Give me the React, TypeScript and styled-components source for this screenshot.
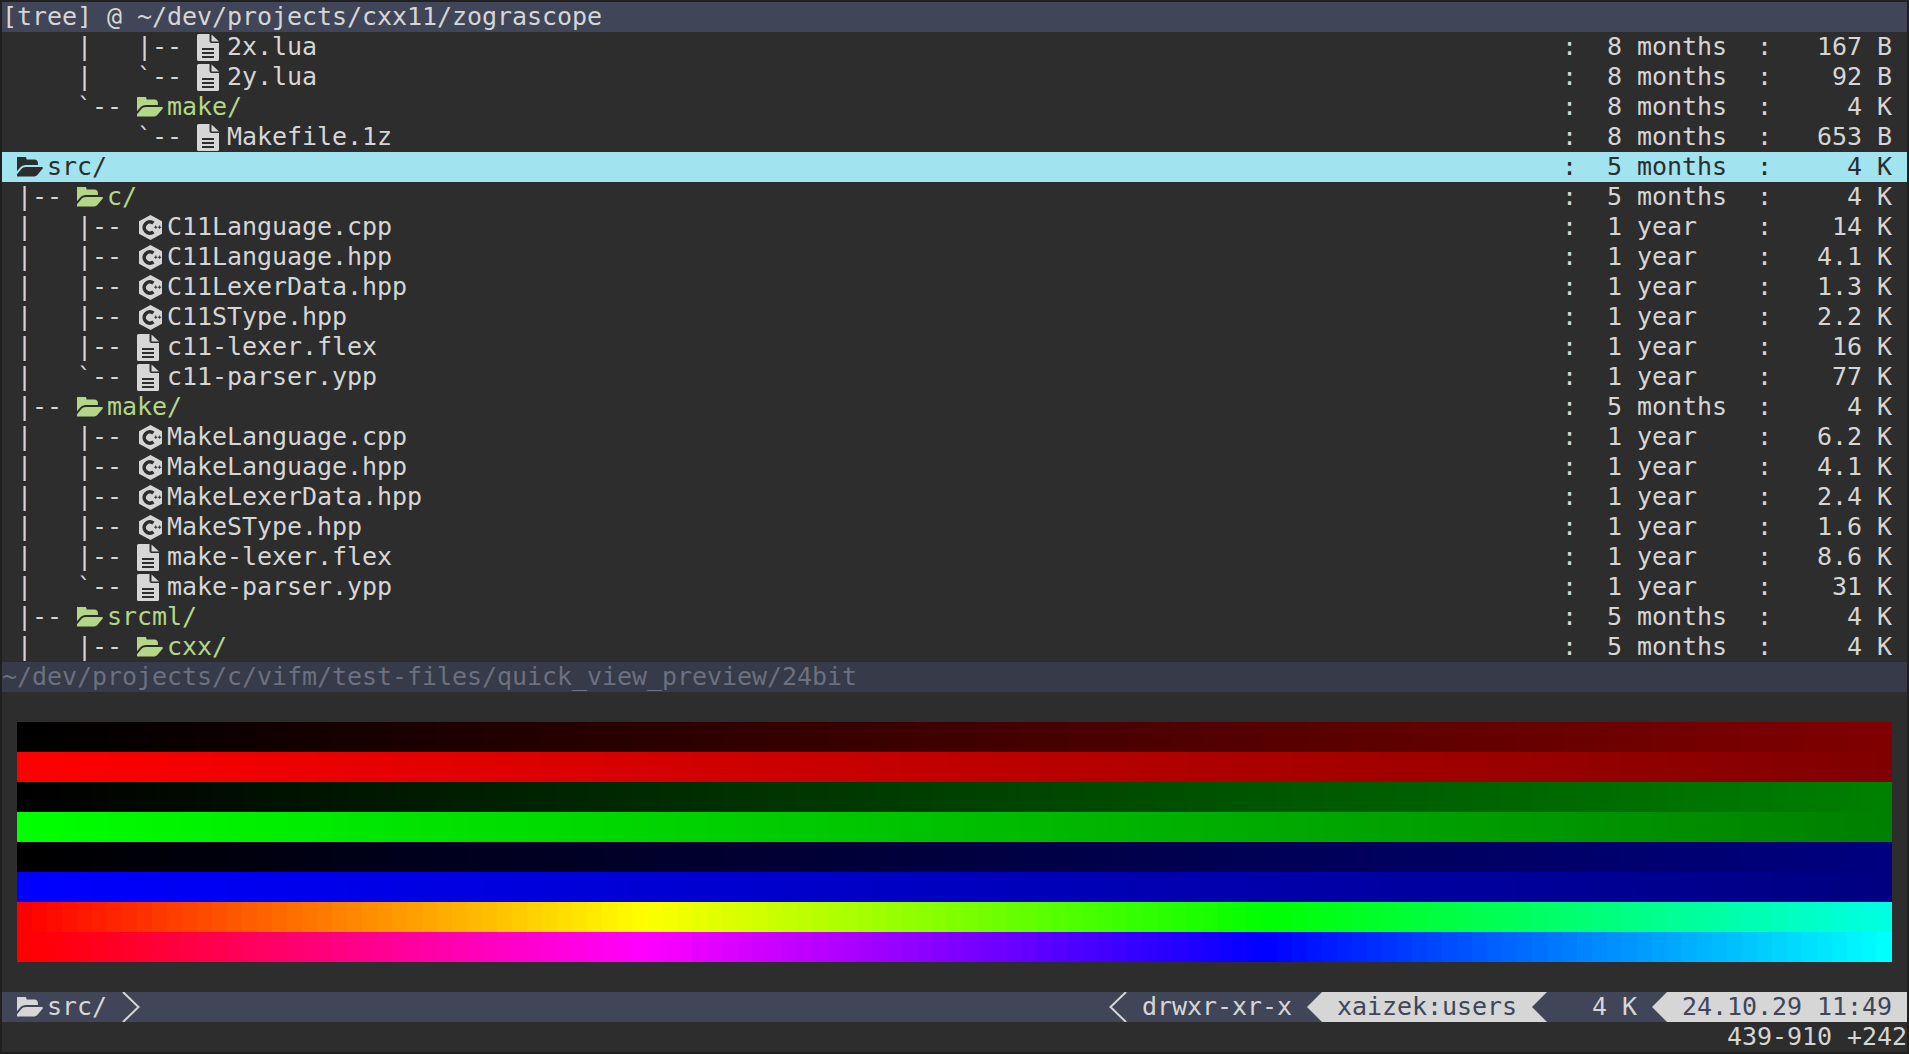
import React from "react";
import styled, { createGlobalStyle } from "styled-components";

const CELL = 15;

const Global = createGlobalStyle`
  html, body { margin: 0; padding: 0; background: #202020; overflow: hidden; }
  #root { width: 1909px; height: 1054px; }
`;

const Screen = styled.div`
  box-sizing: border-box;
  width: 1909px;
  height: 1054px;
  padding: 2px;
  background: #202020;
`;

const Terminal = styled.div`
  display: flex;
  flex-direction: column;
  width: 1905px;
  height: 1050px;
  background: #2d2d2d;
  color: #d6d6d6;
  font-family: "DejaVu Sans Mono", monospace;
  font-size: 25px;
  line-height: 30px;
  letter-spacing: -0.05px;
  white-space: pre;
  overflow: hidden;
`;

const TitleBar = styled.div`
  height: 30px;
  background: #404557;
  flex: none;
`;

const FileList = styled.div`
  display: flex;
  flex-direction: column;
  flex: none;
`;

const Row = styled.div<{ $active?: boolean }>`
  display: grid;
  grid-template-columns: 1545px 45px 150px 15px 120px;
  height: 30px;
  padding: 0 15px;
  background: ${(p) => (p.$active ? "#a1e3ef" : "transparent")};
  color: ${(p) => (p.$active ? "#2d2d2d" : "#d6d6d6")};
`;

const NameCell = styled.div`
  display: flex;
  align-items: center;
  height: 30px;
`;

const Name = styled.span<{ $dir?: boolean; $active?: boolean }>`
  color: ${(p) => (p.$active ? "#2d2d2d" : p.$dir ? "#b4d787" : "inherit")};
`;

const IconSlot = styled.span`
  display: flex;
  align-items: center;
  width: 30px;
  height: 30px;
  flex: none;
`;

const Size = styled.div`
  text-align: right;
`;

const PathBar = styled.div`
  height: 30px;
  flex: none;
  background: #363a49;
  color: #6c7080;
`;

const Preview = styled.div`
  display: flex;
  flex-direction: column;
  height: 240px;
  padding: 30px 15px;
  flex: none;
`;

const Band = styled.div`
  height: 30px;
  flex: none;
`;

const StatusBar = styled.div`
  display: flex;
  height: 30px;
  flex: none;
  background: #404557;
  color: #d6d6d6;
`;

const StatusLeft = styled.div`
  display: flex;
  align-items: center;
  padding-left: 15px;
`;

const ThinGlyph = styled.svg`
  display: block;
  width: 18px;
  height: 30px;
  flex: none;
`;

const CurrentName = styled.span`
  width: 75px;
`;

const StatusRight = styled.div`
  display: flex;
  margin-left: auto;
`;

const Perms = styled.span`
  width: 165px;
  padding-left: 15px;
`;

const Arrow = styled.svg<{ $back: string }>`
  display: block;
  width: 15px;
  height: 30px;
  flex: none;
  background: ${(p) => p.$back};
`;

const LightSegment = styled.span<{ $width: number }>`
  box-sizing: border-box;
  width: ${(p) => p.$width}px;
  padding-left: 15px;
  background: #d6d6d6;
  color: #404557;
`;

const SizeSegment = styled.span`
  box-sizing: border-box;
  width: 105px;
  padding-right: 15px;
  text-align: right;
`;

const InfoLine = styled.div`
  height: 30px;
  flex: none;
  text-align: right;
`;

const FolderSvg = styled.svg`
  display: block;
  width: 26px;
  height: 20px;
`;

const FileSvg = styled.svg`
  display: block;
  width: 22px;
  height: 27px;
`;

const CppSvg = styled.svg`
  display: block;
  width: 25px;
  height: 25px;
  margin-left: 2px;
`;

const FolderIcon = ({ color }: { color: string }) => (
  <FolderSvg viewBox="128 256 1752 1280" fill={color}>
    <path d="M1879 952q0 31-31 66l-336 396q-43 51-120.5 86.5t-143.5 35.5h-1088q-34 0-60.5-13t-26.5-43q0-31 31-66l336-396q43-51 120.5-86.5t143.5-35.5h1088q34 0 60.5 13t26.5 43zm-343-344v160h-832q-94 0-197 47.5t-164 119.5l-337 396-5 6q0-4-.5-12.5t-.5-12.5v-960q0-92 66-158t158-66h320q92 0 158 66t66 158v32h544q92 0 158 66t66 158z" />
  </FolderSvg>
);

const FileIcon = () => (
  <FileSvg viewBox="0 0 22 27">
    <path
      fill="#d6d6d6"
      d="M0 1.5Q0 0 1.5 0H12.5V7Q12.5 9 14.5 9H22V25.5Q22 27 20.5 27H1.5Q0 27 0 25.5Z"
    />
    <path fill="#d6d6d6" d="M14.5 0.5L22 7.5H14.5Z" />
    <path fill="#2d2d2d" d="M5 14h12v2H5zM5 18h12v2H5zM5 22h12v2H5z" />
  </FileSvg>
);

const CppIcon = () => (
  <CppSvg viewBox="0 0 25 25">
    <path fill="#d6d6d6" d="M11.5 0L23 6.25V18.75L11.5 25L0 18.75V6.25Z" />
    <path fill="none" stroke="#2d2d2d" strokeWidth="3.6" d="M14.4 8.2A5.6 5.6 0 1 0 14.4 16.8" />
    <path fill="#2d2d2d" d="M15.2 11.7h1.1v-1.1h1v1.1h1.1v1h-1.1v1.1h-1v-1.1h-1.1zM19 11.7h1.1v-1.1h1v1.1h1.1v1h-1.1v1.1h-1v-1.1H19z" />
  </CppSvg>
);

type Kind = "dir" | "file" | "cpp";

interface Entry {
  prefix: string;
  kind: Kind;
  name: string;
  time: string;
  size: string;
  active?: boolean;
}

const entries: Entry[] = [
  { prefix: "    |   |-- ", kind: "file", name: "2x.lua", time: "8 months", size: "167 B" },
  { prefix: "    |   `-- ", kind: "file", name: "2y.lua", time: "8 months", size: "92 B" },
  { prefix: "    `-- ", kind: "dir", name: "make/", time: "8 months", size: "4 K" },
  { prefix: "        `-- ", kind: "file", name: "Makefile.1z", time: "8 months", size: "653 B" },
  { prefix: "", kind: "dir", name: "src/", time: "5 months", size: "4 K", active: true },
  { prefix: "|-- ", kind: "dir", name: "c/", time: "5 months", size: "4 K" },
  { prefix: "|   |-- ", kind: "cpp", name: "C11Language.cpp", time: "1 year", size: "14 K" },
  { prefix: "|   |-- ", kind: "cpp", name: "C11Language.hpp", time: "1 year", size: "4.1 K" },
  { prefix: "|   |-- ", kind: "cpp", name: "C11LexerData.hpp", time: "1 year", size: "1.3 K" },
  { prefix: "|   |-- ", kind: "cpp", name: "C11SType.hpp", time: "1 year", size: "2.2 K" },
  { prefix: "|   |-- ", kind: "file", name: "c11-lexer.flex", time: "1 year", size: "16 K" },
  { prefix: "|   `-- ", kind: "file", name: "c11-parser.ypp", time: "1 year", size: "77 K" },
  { prefix: "|-- ", kind: "dir", name: "make/", time: "5 months", size: "4 K" },
  { prefix: "|   |-- ", kind: "cpp", name: "MakeLanguage.cpp", time: "1 year", size: "6.2 K" },
  { prefix: "|   |-- ", kind: "cpp", name: "MakeLanguage.hpp", time: "1 year", size: "4.1 K" },
  { prefix: "|   |-- ", kind: "cpp", name: "MakeLexerData.hpp", time: "1 year", size: "2.4 K" },
  { prefix: "|   |-- ", kind: "cpp", name: "MakeSType.hpp", time: "1 year", size: "1.6 K" },
  { prefix: "|   |-- ", kind: "file", name: "make-lexer.flex", time: "1 year", size: "8.6 K" },
  { prefix: "|   `-- ", kind: "file", name: "make-parser.ypp", time: "1 year", size: "31 K" },
  { prefix: "|-- ", kind: "dir", name: "srcml/", time: "5 months", size: "4 K" },
  { prefix: "|   |-- ", kind: "dir", name: "cxx/", time: "5 months", size: "4 K" },
];

type RGB = [number, number, number];

const bands: RGB[][] = [
  [[0, 0, 0], [128, 0, 0]],
  [[255, 0, 0], [128, 0, 0]],
  [[0, 0, 0], [0, 128, 0]],
  [[0, 255, 0], [0, 128, 0]],
  [[0, 0, 0], [0, 0, 128]],
  [[0, 0, 255], [0, 0, 128]],
  [[255, 0, 0], [255, 255, 0], [0, 255, 0], [0, 255, 225]],
  [[255, 0, 0], [255, 0, 255], [0, 0, 255], [0, 255, 255]],
];

const COLS = 125;

const colorAt = (stops: RGB[], t: number) => {
  const scaled = t * (stops.length - 1);
  const i = Math.min(Math.floor(scaled), stops.length - 2);
  const f = scaled - i;
  const c = [0, 1, 2].map((k) => Math.round(stops[i][k] + (stops[i + 1][k] - stops[i][k]) * f));
  return `rgb(${c.join(",")})`;
};

const steppedGradient = (stops: RGB[]) => {
  const parts: string[] = [];
  for (let i = 0; i < COLS; i++) {
    const color = colorAt(stops, i / (COLS - 1));
    parts.push(`${color} ${i * CELL}px ${(i + 1) * CELL}px`);
  }
  return `linear-gradient(to right, ${parts.join(",")})`;
};

const renderIcon = (e: Entry) => {
  if (e.kind === "dir") return <FolderIcon color={e.active ? "#2d2d2d" : "#b4d787"} />;
  if (e.kind === "cpp") return <CppIcon />;
  return <FileIcon />;
};

export default function App() {
  return (
    <Screen>
      <Global />
      <Terminal>
        <TitleBar>[tree] @ ~/dev/projects/cxx11/zograscope</TitleBar>
        <FileList>
          {entries.map((e, i) => (
            <Row key={i} $active={e.active}>
              <NameCell>
                <span>{e.prefix}</span>
                <IconSlot>{renderIcon(e)}</IconSlot>
                <Name $dir={e.kind === "dir"} $active={e.active}>{e.name}</Name>
              </NameCell>
              <span>:</span>
              <span>{e.time}</span>
              <span>:</span>
              <Size>{e.size}</Size>
            </Row>
          ))}
        </FileList>
        <PathBar>~/dev/projects/c/vifm/test-files/quick_view_preview/24bit</PathBar>
        <Preview>
          {bands.map((b, i) => (
            <Band key={i} style={{ backgroundImage: steppedGradient(b) }} />
          ))}
        </Preview>
        <StatusBar>
          <StatusLeft>
            <IconSlot><FolderIcon color="#d6d6d6" /></IconSlot>
            <CurrentName>src/</CurrentName>
            <ThinGlyph viewBox="0 0 18 30">
              <path d="M1 0L16.5 15L1 30" fill="none" stroke="#d6d6d6" strokeWidth="2" />
            </ThinGlyph>
          </StatusLeft>
          <StatusRight>
            <ThinGlyph viewBox="0 0 18 30">
              <path d="M17 0L1.5 15L17 30" fill="none" stroke="#d6d6d6" strokeWidth="2" />
            </ThinGlyph>
            <Perms>drwxr-xr-x</Perms>
            <Arrow $back="#404557" viewBox="0 0 15 30"><path fill="#d6d6d6" d="M15 0L0 15L15 30Z" /></Arrow>
            <LightSegment $width={210}>xaizek:users</LightSegment>
            <Arrow $back="#d6d6d6" viewBox="0 0 15 30"><path fill="#404557" d="M15 0L0 15L15 30Z" /></Arrow>
            <SizeSegment>4 K</SizeSegment>
            <Arrow $back="#404557" viewBox="0 0 15 30"><path fill="#d6d6d6" d="M15 0L0 15L15 30Z" /></Arrow>
            <LightSegment $width={240}>24.10.29 11:49</LightSegment>
          </StatusRight>
        </StatusBar>
        <InfoLine>439-910 +242</InfoLine>
      </Terminal>
    </Screen>
  );
}
